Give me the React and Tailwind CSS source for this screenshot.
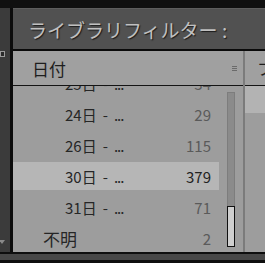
import React from "react";

const rows = [
  { day: "25日", count: "34", indent: true },
  { day: "24日", count: "29", indent: true },
  { day: "26日", count: "115", indent: true },
  { day: "30日", count: "379", indent: true, selected: true },
  { day: "31日", count: "71", indent: true },
  { day: "不明", count: "2", indent: false },
];

export default function App() {
  return (
    <div className="w-[265px] h-[263px] bg-[#101010] flex flex-col overflow-hidden font-['Noto_Sans_CJK_JP','Noto_Sans',sans-serif]">
      <div className="h-[8px] shrink-0 bg-[#101010]" />
      <div className="flex h-[244px] shrink-0">
        {/* left strip */}
        <div className="w-[10px] bg-[#3b3b3b] flex flex-col">
          <div className="h-[43px]" />
          <div className="w-[5px] h-[6px] border border-[#9a9a9a] bg-[#2a2a2a]" />
          <div className="flex-1" />
          <div className="w-0 h-0 border-l-[3px] border-l-transparent border-r-[3px] border-r-transparent border-t-[4px] border-t-[#8a8a8a] ml-[-1px] mb-[8px]" />
        </div>
        <div className="w-[3px] bg-[#0c0c0c]" />
        {/* panel */}
        <div className="flex-1 flex flex-col min-w-0">
          <div className="h-[41px] shrink-0 bg-[#515151] border-t border-[#5e5e5e] flex items-center pl-[15px]">
            <span className="text-[19px] leading-none text-[#c0c0c0] whitespace-nowrap [text-shadow:1px_1px_1px_#1c1c1c]">
              ライブラリフィルター :
            </span>
          </div>
          <div className="h-[2px] shrink-0 bg-[#0a0a0a]" />
          <div className="flex flex-1 min-h-0">
            {/* left column */}
            <div className="w-[230px] flex flex-col bg-[#9d9d9d]">
              <div className="h-[34px] shrink-0 bg-[#a0a0a0] flex items-center pl-[19px] pr-[6px]">
                <span className="text-[17px] text-[#1e1e1e] leading-none">日付</span>
                <div className="flex-1" />
                <div className="flex flex-col gap-[1px]">
                  <div className="w-[5px] h-[1px] bg-[#6a6a6a]" />
                  <div className="w-[5px] h-[1px] bg-[#6a6a6a]" />
                  <div className="w-[5px] h-[1px] bg-[#6a6a6a]" />
                </div>
              </div>
              <div className="h-[1px] shrink-0 bg-[#141414]" />
              <div className="flex-1 flex overflow-hidden">
                <div className="w-[206px] overflow-hidden">
                  <div className="mt-[-17px]">
                    {rows.map((r) => (
                      <div key={r.day} className="h-[31px]">
                        <div
                          className={
                            "h-[28px] flex items-center pr-[8px] text-[15px] leading-none " +
                            (r.selected ? "bg-[#b6b6b6]" : "")
                          }
                        >
                          {r.indent ? (
                            <span className="text-[#262626] whitespace-nowrap pl-[52px] flex items-center">
                              <span>{r.day}</span>
                              <span className="ml-[6px]">-</span>
                              <span className="ml-[6px] tracking-[-1px]">...</span>
                            </span>
                          ) : (
                            <span className="text-[#262626] whitespace-nowrap pl-[30px] text-[17px]">
                              {r.day}
                            </span>
                          )}
                          <div className="flex-1" />
                          <span className={r.selected ? "text-[#222222]" : "text-[#5a5a5a]"}>
                            {r.count}
                          </span>
                        </div>
                      </div>
                    ))}
                  </div>
                </div>
                <div className="w-[8px] ml-[8px] flex flex-col pt-[6px] pb-[5px]">
                  <div className="flex-1 bg-[#8b8b8b] border-x border-t border-[#7d7d7d]" />
                  <div className="h-[41px] bg-[#cfcfcf] border border-[#111]" />
                </div>
              </div>
            </div>
            <div className="w-[2px] bg-[#7b7b7b]" />
            {/* right column */}
            <div className="flex-1 flex flex-col bg-[#9d9d9d] overflow-hidden">
              <div className="h-[34px] shrink-0 bg-[#a0a0a0] flex items-center pl-[12px] overflow-hidden">
                <span className="text-[16px] text-[#1e1e1e] leading-none whitespace-nowrap">ファイル</span>
              </div>
              <div className="h-[1px] shrink-0 bg-[#141414]" />
              <div className="h-[27px] bg-[#b3b3b3]" />
            </div>
          </div>
        </div>
      </div>
      <div className="h-[2px] shrink-0 bg-[#0e0e0e]" />
      <div className="h-[6px] shrink-0 bg-[#474747]" />
      <div className="h-[3px] shrink-0 bg-[#0e0e0e]" />
    </div>
  );
}
